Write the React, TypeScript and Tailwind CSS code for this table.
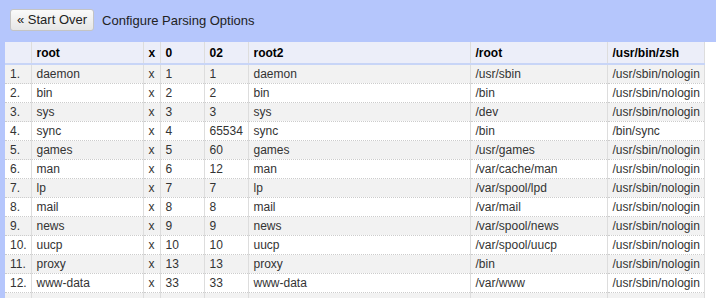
import React from "react";

const rows: string[][] = [
  ["daemon", "x", "1", "1", "daemon", "/usr/sbin", "/usr/sbin/nologin"],
  ["bin", "x", "2", "2", "bin", "/bin", "/usr/sbin/nologin"],
  ["sys", "x", "3", "3", "sys", "/dev", "/usr/sbin/nologin"],
  ["sync", "x", "4", "65534", "sync", "/bin", "/bin/sync"],
  ["games", "x", "5", "60", "games", "/usr/games", "/usr/sbin/nologin"],
  ["man", "x", "6", "12", "man", "/var/cache/man", "/usr/sbin/nologin"],
  ["lp", "x", "7", "7", "lp", "/var/spool/lpd", "/usr/sbin/nologin"],
  ["mail", "x", "8", "8", "mail", "/var/mail", "/usr/sbin/nologin"],
  ["news", "x", "9", "9", "news", "/var/spool/news", "/usr/sbin/nologin"],
  ["uucp", "x", "10", "10", "uucp", "/var/spool/uucp", "/usr/sbin/nologin"],
  ["proxy", "x", "13", "13", "proxy", "/bin", "/usr/sbin/nologin"],
  ["www-data", "x", "33", "33", "www-data", "/var/www", "/usr/sbin/nologin"],
];

const headers = ["root", "x", "0", "02", "root2", "/root", "/usr/bin/zsh"];
const widths = [26, 112, 17, 44, 44, 222, 137, 97];

const App = () => {
  return (
    <div className="h-[298px] w-[716px] overflow-hidden bg-[#b5c6fc] font-['Liberation_Sans',Arial,sans-serif]">
      <div className="flex items-start gap-2 pl-[10px] pt-[9px] h-[42px]">
        <button className="h-[22px] rounded-[3px] border border-[#c4c4c4] bg-gradient-to-b from-[#fafafa] to-[#e6e6e6] px-[6px] text-[13px] text-[#222]">
          « Start Over
        </button>
        <span className="mt-[2px] text-[13px] text-[#222]">Configure Parsing Options</span>
      </div>
      <div className="ml-[5px] bg-white">
        <table className="table-fixed border-collapse text-[12px] text-[#333] w-[699px]">
          <colgroup>
            {widths.map((w, i) => (
              <col key={i} style={{ width: w }} />
            ))}
          </colgroup>
          <thead>
            <tr className="h-[22px] bg-[#eceef9] border-b-2 border-[#c8d5f7]">
              <th className="border-r border-[#dddddd]"></th>
              {headers.map((h, i) => (
                <th
                  key={i}
                  className="border-r border-[#dddddd] px-[5px] text-left font-bold text-black whitespace-nowrap overflow-hidden"
                >
                  {h}
                </th>
              ))}
            </tr>
          </thead>
          <tbody>
            {rows.map((r, i) => (
              <tr
                key={i}
                className={
                  "h-[19px] border-b border-dotted border-[#cccccc] " +
                  (i % 2 === 0 ? "bg-[#f2f2f2]" : "bg-white")
                }
              >
                <td className="border-r border-solid border-[#dddddd] px-[5px]">{i + 1}.</td>
                {r.map((c, j) => (
                  <td
                    key={j}
                    className="border-r border-solid border-[#dddddd] px-[5px] whitespace-nowrap overflow-hidden"
                  >
                    {c}
                  </td>
                ))}
              </tr>
            ))}
            {/* next row only peeks in at the bottom edge */}
            <tr className="h-[19px] bg-[#f2f2f2]">
              {widths.map((_, j) => (
                <td key={j} className="border-r border-solid border-[#dddddd]"></td>
              ))}
            </tr>
          </tbody>
        </table>
      </div>
    </div>
  );
};

export default App;
